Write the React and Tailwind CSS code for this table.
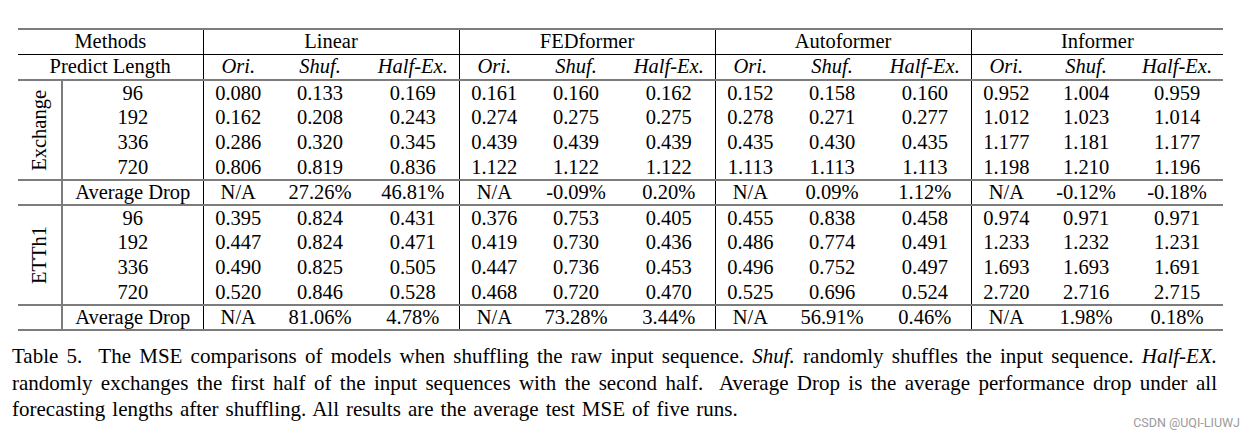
import React from "react";

const groups = ["Linear", "FEDformer", "Autoformer", "Informer"];

const exchange = [
  ["96", "0.080", "0.133", "0.169", "0.161", "0.160", "0.162", "0.152", "0.158", "0.160", "0.952", "1.004", "0.959"],
  ["192", "0.162", "0.208", "0.243", "0.274", "0.275", "0.275", "0.278", "0.271", "0.277", "1.012", "1.023", "1.014"],
  ["336", "0.286", "0.320", "0.345", "0.439", "0.439", "0.439", "0.435", "0.430", "0.435", "1.177", "1.181", "1.177"],
  ["720", "0.806", "0.819", "0.836", "1.122", "1.122", "1.122", "1.113", "1.113", "1.113", "1.198", "1.210", "1.196"],
];
const exchangeAvg = ["N/A", "27.26%", "46.81%", "N/A", "-0.09%", "0.20%", "N/A", "0.09%", "1.12%", "N/A", "-0.12%", "-0.18%"];

const etth1 = [
  ["96", "0.395", "0.824", "0.431", "0.376", "0.753", "0.405", "0.455", "0.838", "0.458", "0.974", "0.971", "0.971"],
  ["192", "0.447", "0.824", "0.471", "0.419", "0.730", "0.436", "0.486", "0.774", "0.491", "1.233", "1.232", "1.231"],
  ["336", "0.490", "0.825", "0.505", "0.447", "0.736", "0.453", "0.496", "0.752", "0.497", "1.693", "1.693", "1.691"],
  ["720", "0.520", "0.846", "0.528", "0.468", "0.720", "0.470", "0.525", "0.696", "0.524", "2.720", "2.716", "2.715"],
];
const etth1Avg = ["N/A", "81.06%", "4.78%", "N/A", "73.28%", "3.44%", "N/A", "56.91%", "0.46%", "N/A", "1.98%", "0.18%"];

function ValueCells({ values }) {
  return values.map((v, i) => (
    <td
      key={i}
      className={
        "p-0 text-center whitespace-nowrap " +
        (i % 3 === 0 ? "border-l border-l-black" : "")
      }
    >
      {v}
    </td>
  ));
}

function Section({ name, rows, avg }) {
  return (
    <>
      {rows.map((r, ri) => (
        <tr
          key={ri}
          className={"h-[25px] " + (ri === 0 ? "border-t-2 border-t-[#7c7c7c]" : "")}
        >
          {ri === 0 && (
            <td rowSpan={4} className="p-0 border-r-2 border-r-[#7c7c7c] align-middle">
              <div className="flex items-center justify-center">
                <span className="[writing-mode:vertical-rl] rotate-180 whitespace-nowrap leading-none">
                  {name}
                </span>
              </div>
            </td>
          )}
          <td className="p-0 text-center">{r[0]}</td>
          <ValueCells values={r.slice(1)} />
        </tr>
      ))}
      <tr className="h-[25px] border-t-2 border-t-[#7c7c7c]">
        <td className="p-0 border-r-2 border-r-[#7c7c7c]"></td>
        <td className="p-0 text-center whitespace-nowrap">Average Drop</td>
        <ValueCells values={avg} />
      </tr>
    </>
  );
}

export default function App() {
  return (
    <div className="relative w-[1254px] h-[443px] bg-white text-black overflow-hidden pt-[28px] font-['Liberation_Serif','Times_New_Roman',serif]">
      <table className="ml-[18px] w-[1205px] table-fixed border-collapse text-[20.5px] leading-[23px]">
        <colgroup>
          <col className="w-[44px]" />
          <col className="w-[141px]" />
          <col className="w-[70px]" />
          <col className="w-[94px]" />
          <col className="w-[92px]" />
          <col className="w-[70px]" />
          <col className="w-[94px]" />
          <col className="w-[92px]" />
          <col className="w-[70px]" />
          <col className="w-[94px]" />
          <col className="w-[92px]" />
          <col className="w-[70px]" />
          <col className="w-[90px]" />
          <col className="w-[92px]" />
        </colgroup>
        <thead>
          <tr className="h-[25px] border-t-2 border-t-[#7c7c7c]">
            <th colSpan={2} className="p-0 font-normal text-center">
              Methods
            </th>
            {groups.map((g) => (
              <th key={g} colSpan={3} className="p-0 font-normal text-center border-l border-l-black">
                {g}
              </th>
            ))}
          </tr>
          <tr className="h-[26px] border-t border-t-black">
            <th colSpan={2} className="p-0 font-normal text-center">
              Predict Length
            </th>
            {groups.map((g) => (
              <React.Fragment key={g}>
                <th className="p-0 font-normal italic text-center border-l border-l-black">Ori.</th>
                <th className="p-0 font-normal italic text-center">Shuf.</th>
                <th className="p-0 font-normal italic text-center">Half-Ex.</th>
              </React.Fragment>
            ))}
          </tr>
        </thead>
        <tbody className="border-b-2 border-b-[#7c7c7c]">
          <Section name="Exchange" rows={exchange} avg={exchangeAvg} />
          <Section name="ETTh1" rows={etth1} avg={etth1Avg} />
        </tbody>
      </table>

      <div className="ml-[12px] mt-[12px] w-[1205px] text-[21px] leading-[26.5px]">
        <p className="text-justify [text-align-last:justify]">
          Table 5.&nbsp; The MSE comparisons of models when shuffling the raw input sequence. <i>Shuf.</i> randomly shuffles the input sequence. <i>Half-EX.</i>
        </p>
        <p className="text-justify [text-align-last:justify]">
          randomly exchanges the first half of the input sequences with the second half.&nbsp; Average Drop is the average performance drop under all
        </p>
        <p className="[word-spacing:1.8px]">
          forecasting lengths after shuffling. All results are the average test MSE of five runs.
        </p>
      </div>

      <div className="absolute right-[14px] top-[414px] text-[12.5px] text-[#9a9a9a] font-['Roboto','Liberation_Sans',sans-serif]">
        CSDN @UQI-LIUWJ
      </div>
    </div>
  );
}
